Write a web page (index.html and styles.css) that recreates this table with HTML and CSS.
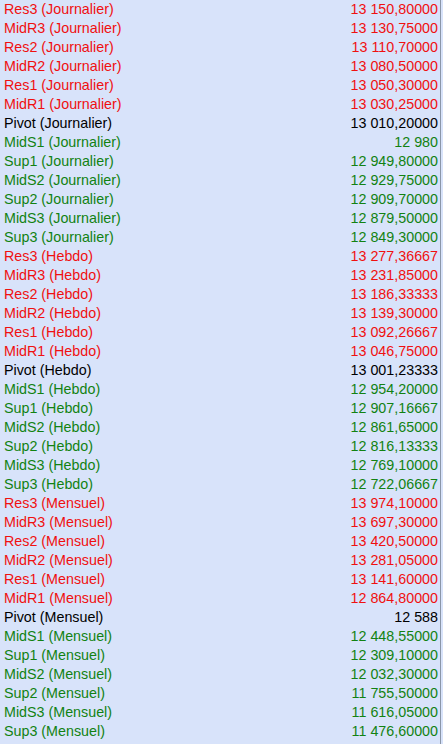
FILE: index.html
```html
<!DOCTYPE html>
<html>
<head>
<meta charset="utf-8">
<link rel="stylesheet" href="styles.css">
</head>
<body>
<div class="table">
<div class="row res"><span>Res3 (Journalier)</span><span>13 150,80000</span></div>
<div class="row res"><span>MidR3 (Journalier)</span><span>13 130,75000</span></div>
<div class="row res"><span>Res2 (Journalier)</span><span>13 110,70000</span></div>
<div class="row res"><span>MidR2 (Journalier)</span><span>13 080,50000</span></div>
<div class="row res"><span>Res1 (Journalier)</span><span>13 050,30000</span></div>
<div class="row res"><span>MidR1 (Journalier)</span><span>13 030,25000</span></div>
<div class="row piv"><span>Pivot (Journalier)</span><span>13 010,20000</span></div>
<div class="row sup"><span>MidS1 (Journalier)</span><span>12 980</span></div>
<div class="row sup"><span>Sup1 (Journalier)</span><span>12 949,80000</span></div>
<div class="row sup"><span>MidS2 (Journalier)</span><span>12 929,75000</span></div>
<div class="row sup"><span>Sup2 (Journalier)</span><span>12 909,70000</span></div>
<div class="row sup"><span>MidS3 (Journalier)</span><span>12 879,50000</span></div>
<div class="row sup"><span>Sup3 (Journalier)</span><span>12 849,30000</span></div>
<div class="row res"><span>Res3 (Hebdo)</span><span>13 277,36667</span></div>
<div class="row res"><span>MidR3 (Hebdo)</span><span>13 231,85000</span></div>
<div class="row res"><span>Res2 (Hebdo)</span><span>13 186,33333</span></div>
<div class="row res"><span>MidR2 (Hebdo)</span><span>13 139,30000</span></div>
<div class="row res"><span>Res1 (Hebdo)</span><span>13 092,26667</span></div>
<div class="row res"><span>MidR1 (Hebdo)</span><span>13 046,75000</span></div>
<div class="row piv"><span>Pivot (Hebdo)</span><span>13 001,23333</span></div>
<div class="row sup"><span>MidS1 (Hebdo)</span><span>12 954,20000</span></div>
<div class="row sup"><span>Sup1 (Hebdo)</span><span>12 907,16667</span></div>
<div class="row sup"><span>MidS2 (Hebdo)</span><span>12 861,65000</span></div>
<div class="row sup"><span>Sup2 (Hebdo)</span><span>12 816,13333</span></div>
<div class="row sup"><span>MidS3 (Hebdo)</span><span>12 769,10000</span></div>
<div class="row sup"><span>Sup3 (Hebdo)</span><span>12 722,06667</span></div>
<div class="row res"><span>Res3 (Mensuel)</span><span>13 974,10000</span></div>
<div class="row res"><span>MidR3 (Mensuel)</span><span>13 697,30000</span></div>
<div class="row res"><span>Res2 (Mensuel)</span><span>13 420,50000</span></div>
<div class="row res"><span>MidR2 (Mensuel)</span><span>13 281,05000</span></div>
<div class="row res"><span>Res1 (Mensuel)</span><span>13 141,60000</span></div>
<div class="row res"><span>MidR1 (Mensuel)</span><span>12 864,80000</span></div>
<div class="row piv"><span>Pivot (Mensuel)</span><span>12 588</span></div>
<div class="row sup"><span>MidS1 (Mensuel)</span><span>12 448,55000</span></div>
<div class="row sup"><span>Sup1 (Mensuel)</span><span>12 309,10000</span></div>
<div class="row sup"><span>MidS2 (Mensuel)</span><span>12 032,30000</span></div>
<div class="row sup"><span>Sup2 (Mensuel)</span><span>11 755,50000</span></div>
<div class="row sup"><span>MidS3 (Mensuel)</span><span>11 616,05000</span></div>
<div class="row sup"><span>Sup3 (Mensuel)</span><span>11 476,60000</span></div>
</div>
</body>
</html>
```
FILE: styles.css
```css
html, body {
  margin: 0;
  padding: 0;
  background: #d8e3fa;
  width: 443px;
  height: 744px;
  overflow: hidden;
}
.table {
  width: 440px;
  height: 744px;
  border-right: 1px solid #8a96a8;
  font-family: "Liberation Sans", Arial, sans-serif;
  font-size: 14.3px;
}
.row {
  display: flex;
  justify-content: space-between;
  align-items: center;
  height: 19px;
  padding: 0 2px 0 4px;
  line-height: 19px;
}
.res { color: #f01010; }
.piv { color: #000000; }
.sup { color: #128212; }
```
